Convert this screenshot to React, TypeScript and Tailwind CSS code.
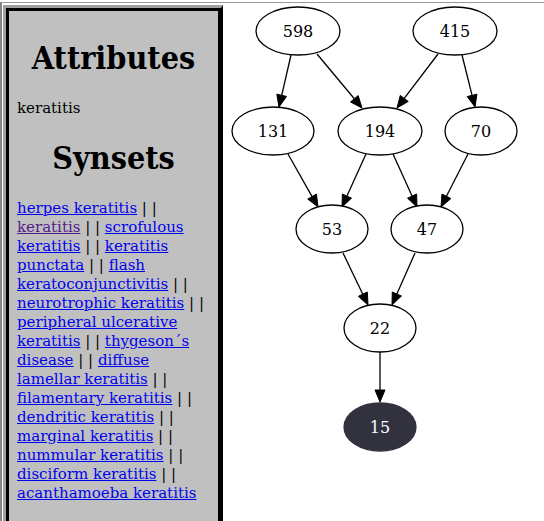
import React from "react";

const links: { t: string; v?: boolean }[] = [
  { t: "herpes keratitis" },
  { t: "keratitis", v: true },
  { t: "scrofulous keratitis" },
  { t: "keratitis punctata" },
  { t: "flash keratoconjunctivitis" },
  { t: "neurotrophic keratitis" },
  { t: "peripheral ulcerative keratitis" },
  { t: "thygeson\u00b4s disease" },
  { t: "diffuse lamellar keratitis" },
  { t: "filamentary keratitis" },
  { t: "dendritic keratitis" },
  { t: "marginal keratitis" },
  { t: "nummular keratitis" },
  { t: "disciform keratitis" },
  { t: "acanthamoeba keratitis" },
];

type N = { id: string; x: number; y: number; rx: number; dark?: boolean };
const nodes: N[] = [
  { id: "598", x: 298, y: 31, rx: 42 },
  { id: "415", x: 455, y: 31, rx: 42 },
  { id: "131", x: 273, y: 131, rx: 41 },
  { id: "194", x: 380, y: 131, rx: 42 },
  { id: "70", x: 481, y: 131, rx: 36 },
  { id: "53", x: 332, y: 229, rx: 36 },
  { id: "47", x: 427, y: 229, rx: 36 },
  { id: "22", x: 380, y: 328, rx: 36 },
  { id: "15", x: 380, y: 427, rx: 36, dark: true },
];

const edges: [number, number, number, number][] = [
  [291, 55, 279, 107],
  [317, 54, 362, 108],
  [438, 54, 397, 108],
  [462, 55, 475, 107],
  [288, 154, 318, 207],
  [366, 154, 342, 207],
  [393, 154, 417, 207],
  [468, 154, 441, 207],
  [343, 253, 368, 305],
  [415, 253, 392, 305],
  [380, 352, 380, 402],
];

function Edge({ e }: { e: [number, number, number, number] }) {
  const [x1, y1, x2, y2] = e;
  const dx = x2 - x1;
  const dy = y2 - y1;
  const len = Math.hypot(dx, dy);
  const ux = dx / len;
  const uy = dy / len;
  const L = 12;
  const W = 5;
  const bx = x2 - ux * L;
  const by = y2 - uy * L;
  const px = -uy * W;
  const py = ux * W;
  return (
    <g>
      <line x1={x1} y1={y1} x2={bx} y2={by} stroke="black" strokeWidth={1.3} />
      <polygon
        points={`${x2},${y2} ${bx + px},${by + py} ${bx - px},${by - py}`}
        fill="black"
        stroke="black"
        strokeWidth={1}
      />
    </g>
  );
}

export default function App() {
  return (
    <div
      className="h-[521px] w-[544px] overflow-hidden bg-white text-black"
      style={{ fontFamily: '"DejaVu Serif", serif' }}
    >
      <div className="mt-[2px] flex h-[530px] border-l-2 border-t border-l-[#8c8484] border-t-[#9a9a9a]">
        <div className="ml-px mt-[2px] w-[220px] shrink-0 border-l-[3px] border-r-[2px] border-t-[3px] border-l-[#a0a0a0] border-r-black border-t-[#a0a0a0]">
          <div className="h-full border-[3px] border-black bg-[#c0c0c0] px-[8px] pt-[8px] text-[15px] leading-[19px]">
            <h1
              className="mt-[21px] mb-[22px] text-center text-[32px] font-bold leading-[37px]"
              style={{ fontFamily: '"DejaVu Serif Condensed", "DejaVu Serif", serif' }}
            >
              Attributes
            </h1>
            <p>keratitis</p>
            <h1
              className="mt-[22px] mb-[22px] text-center text-[32px] font-bold leading-[37px]"
              style={{ fontFamily: '"DejaVu Serif Condensed", "DejaVu Serif", serif' }}
            >
              Synsets
            </h1>
            <p>
              {links.map((l, i) => (
                <React.Fragment key={i}>
                  <a
                    href="#"
                    className={
                      "underline " + (l.v ? "text-[#551a8b]" : "text-[#0000ee]")
                    }
                  >
                    {l.t}
                  </a>
                  {i < links.length - 1 ? " | | " : ""}
                </React.Fragment>
              ))}
            </p>
          </div>
        </div>
        <svg
          width={321}
          height={518}
          viewBox="223 3 321 518"
          className="block shrink-0"
        >
          {edges.map((e, i) => (
            <Edge key={i} e={e} />
          ))}
          {nodes.map((n) => (
            <g key={n.id}>
              <ellipse
                cx={n.x}
                cy={n.y}
                rx={n.rx}
                ry={24}
                fill={n.dark ? "#32323f" : "white"}
                stroke={n.dark ? "#32323f" : "black"}
                strokeWidth={1.3}
              />
              <text
                x={n.x}
                y={n.y + 6}
                textAnchor="middle"
                fontSize={16}
                fontFamily='"DejaVu Serif", serif'
                fill={n.dark ? "white" : "black"}
              >
                {n.id}
              </text>
            </g>
          ))}
        </svg>
      </div>
    </div>
  );
}
